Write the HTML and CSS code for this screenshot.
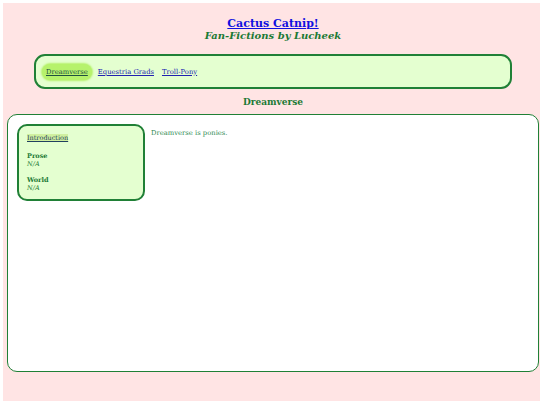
FILE: index.html
```html
<!DOCTYPE html>
<html lang="en">
<head>
    <meta charset="UTF-8">
    <title>Cactus Catnip! - Dreamverse</title>
    <link rel="stylesheet" href="styles.css">
</head>
<body>
    <div class="page">
        <header class="site-head">
            <a class="site-title" href="#">Cactus Catnip!</a>
            <div class="site-sub">Fan-Fictions by Lucheek</div>
        </header>

        <nav class="nav">
            <a class="nav-link active" href="#">Dreamverse</a>
            <a class="nav-link" href="#">Equestria Grads</a>
            <a class="nav-link" href="#">Troll-Pony</a>
        </nav>

        <h2 class="section-title">Dreamverse</h2>

        <div class="main">
            <aside class="side">
                <a class="side-link" href="#">Introduction</a>
                <div class="side-group first">
                    <div class="side-head">Prose</div>
                    <div class="side-none">N/A</div>
                </div>
                <div class="side-group">
                    <div class="side-head">World</div>
                    <div class="side-none">N/A</div>
                </div>
            </aside>
            <div class="content">
                <p>Dreamverse is ponies.</p>
            </div>
        </div>
    </div>
</body>
</html>
```

FILE: styles.css
```css
html {
    background-color: white;
}
body {
    margin: 0;
    font-family: "DejaVu Serif", serif;
}
.page {
    margin: 3px 0 0 3px;
    height: 398px;
    background-color: #ffe4e4;
    padding: 13px 1px 0 4px;
    box-sizing: border-box;
}
.site-head {
    text-align: center;
    line-height: 12px;
}
.site-title {
    color: #1010e0;
    font-weight: bold;
    font-size: 11px;
}
.site-sub {
    color: #1b7a35;
    font-weight: bold;
    font-style: italic;
    font-size: 10px;
}
.nav {
    margin: 12px 27px 0 27px;
    height: 35px;
    box-sizing: border-box;
    border: 2px solid #208036;
    border-radius: 11px;
    background-color: #e4ffd0;
    display: flex;
    align-items: center;
    gap: 8px;
    padding: 0 6px;
}
.nav-link {
    color: #2020b0;
    font-size: 6.8px;
    padding: 4px 0;
}
.nav-link.active {
    color: #205040;
    background-color: #b6f26c;
    border-radius: 8px;
    padding: 4px 4px;
    margin-right: -2px;
    box-shadow: 0 0 2px 1px #b6f26c;
}
.section-title {
    margin: 7px 0 0;
    text-align: center;
    font-size: 9px;
    color: #1b7a35;
    line-height: 12px;
}
.main {
    margin-top: 6px;
    height: 258px;
    box-sizing: border-box;
    border: 1.5px solid #208036;
    border-radius: 10px;
    background-color: white;
    display: flex;
    align-items: flex-start;
    gap: 6px;
    padding: 9px 9px;
}
.side {
    width: 128px;
    box-sizing: border-box;
    border: 2px solid #208036;
    border-radius: 10px;
    background-color: #e4ffd0;
    padding: 8px 8px 7px;
    font-size: 6.5px;
    line-height: 8px;
    color: #1b7a35;
}
.side-link {
    color: #204060;
    background-color: #d0f0a0;
}
.side-group {
    margin-top: 8px;
}
.side-group.first {
    margin-top: 10px;
}
.side-head {
    font-weight: bold;
}
.side-none {
    font-style: italic;
}
.content {
    font-size: 6.8px;
    color: #2e8a52;
}
.content p {
    margin: 5px 0 0;
}
```
